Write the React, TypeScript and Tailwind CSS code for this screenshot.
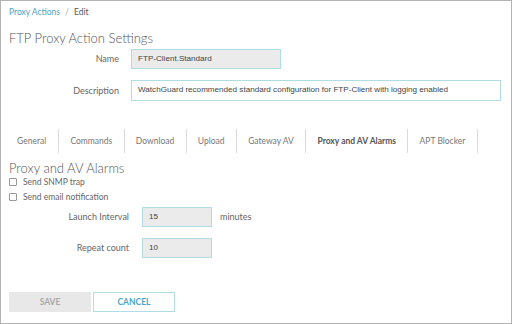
const tabs = ["General", "Commands", "Download", "Upload", "Gateway AV", "Proxy and AV Alarms", "APT Blocker"]

const ui = { fontFamily: "Lato, 'Open Sans', sans-serif" }
const field = { fontFamily: "'Liberation Sans', Arial, sans-serif" }

export default function App() {
  return (
    <div
      className="w-[512px] h-[324px] overflow-hidden bg-white border border-[#b3b3b3] pl-[8px] text-[#666]"
      style={ui}
    >
      {/* breadcrumb */}
      <div className="flex items-center h-[12px] mt-[5px] text-[8.5px]">
        <span className="text-[#4aa5c6]">Proxy Actions</span>
        <span className="mx-[5px] text-[#aaa]">/</span>
        <span className="text-[#555]">Edit</span>
      </div>

      <h1 className="mt-[11px] h-[18px] leading-[18px] text-[13px] font-light text-[#555]">
        FTP Proxy Action Settings
      </h1>

      <div className="mt-[2px] flex items-center gap-[12px]">
        <label className="w-[110px] text-right text-[9px]">Name</label>
        <div
          className="w-[150px] h-[20px] flex items-center px-[6px] bg-[#ebebeb] border border-[#b0dde4] text-[8.1px] text-[#444]"
          style={field}
        >
          FTP-Client.Standard
        </div>
      </div>

      <div className="mt-[11px] flex items-center gap-[12px]">
        <label className="w-[110px] text-right text-[9px]">Description</label>
        <div
          className="w-[370px] h-[21px] flex items-center px-[6px] bg-white border border-[#b0dde4] text-[8.1px] text-[#444]"
          style={field}
        >
          WatchGuard recommended standard configuration for FTP-Client with logging enabled
        </div>
      </div>

      {/* tabs */}
      <div className="mt-[28px] flex h-[24px] text-[8.5px]">
        {tabs.map((t, i) => (
          <div
            key={t}
            className={
              "flex items-center border-r border-[#dadada] " +
              (i === 0 ? "pl-[8px] pr-[12px] " : "px-[11.3px] ") +
              (t === "Proxy and AV Alarms" ? "font-bold text-[#555]" : "text-[#777]")
            }
          >
            {t}
          </div>
        ))}
      </div>

      <h2 className="mt-[6px] h-[18px] leading-[18px] text-[13px] font-light text-[#555]">Proxy and AV Alarms</h2>

      <div className="mt-[1px] flex flex-col gap-[7px] text-[8.5px]">
        <label className="flex items-center gap-[6px] h-[8px]">
          <span className="w-[8px] h-[8px] border border-[#999] rounded-[1px] bg-white" />
          Send SNMP trap
        </label>
        <label className="flex items-center gap-[6px] h-[8px]">
          <span className="w-[8px] h-[8px] border border-[#999] rounded-[1px] bg-white" />
          Send email notification
        </label>
      </div>

      <div className="mt-[6px] flex items-center gap-[13px]">
        <label className="w-[120px] text-right text-[9px]">Launch Interval</label>
        <div
          className="w-[70px] h-[20px] flex items-center px-[6px] bg-[#ebebeb] border border-[#b0dde4] text-[8.1px] text-[#444]"
          style={field}
        >
          15
        </div>
        <span className="-ml-[5px] text-[9px]">minutes</span>
      </div>

      <div className="mt-[11px] flex items-center gap-[13px]">
        <label className="w-[120px] text-right text-[9px]">Repeat count</label>
        <div
          className="w-[70px] h-[20px] flex items-center px-[6px] bg-[#ebebeb] border border-[#b0dde4] text-[8.1px] text-[#444]"
          style={field}
        >
          10
        </div>
      </div>

      <div className="mt-[34px] flex gap-[2px] text-[8.5px] font-bold">
        <button className="w-[82px] h-[20px] bg-[#e8e8e8] text-[#a8a8a8]">SAVE</button>
        <button className="w-[82px] h-[20px] bg-white border border-[#b0dde4] text-[#4aa5c6]">CANCEL</button>
      </div>
    </div>
  )
}
